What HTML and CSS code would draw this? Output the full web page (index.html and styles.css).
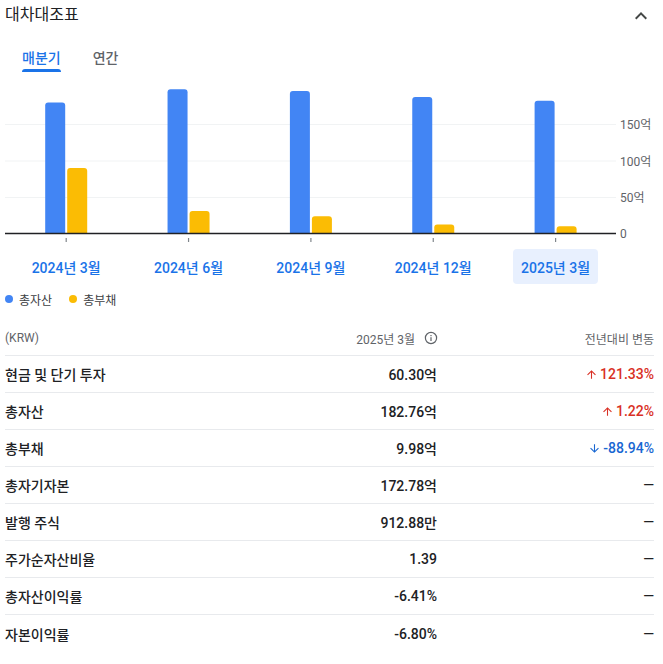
FILE: index.html
```html
<!DOCTYPE html>
<html lang="ko">
<head>
<meta charset="utf-8">
<title>대차대조표</title>
<link rel="stylesheet" href="styles.css">
</head>
<body>
<section class="card">
  <header class="card-head">
    <h2 class="title">대차대조표</h2>
    <svg class="chevron" width="24" height="24" viewBox="0 0 24 24"><path d="M12 8l-6 6 1.41 1.41L12 10.83l4.59 4.58L18 14z" fill="#444746"/></svg>
  </header>

  <nav class="tabs">
    <div class="tab active"><span>매분기</span><i class="bar"></i></div>
    <div class="tab"><span>연간</span><i class="bar"></i></div>
  </nav>

  <svg class="chart" width="663" height="165" viewBox="0 0 663 165">
    <g stroke="#f1f3f4" stroke-width="1">
      <line x1="5" y1="44.5" x2="616" y2="44.5"/>
      <line x1="5" y1="81" x2="616" y2="81"/>
      <line x1="5" y1="117.5" x2="616" y2="117.5"/>
    </g>
    <g class="axis-labels" fill="#5f6368">
      <text x="620" y="49">150억</text>
      <text x="620" y="85.5">100억</text>
      <text x="620" y="122">50억</text>
      <text x="620" y="158">0</text>
    </g>
    <g fill="#4285f4">
      <path d="M45.2 153.5V25.5Q45.2 22.5 48.2 22.5H62.2Q65.2 22.5 65.2 25.5V153.5Z"/>
      <path d="M167.55 153.5V12.2Q167.55 9.2 170.55 9.2H184.55Q187.55 9.2 187.55 12.2V153.5Z"/>
      <path d="M289.9 153.5V13.9Q289.9 10.9 292.9 10.9H306.9Q309.9 10.9 309.9 13.9V153.5Z"/>
      <path d="M412.25 153.5V19.9Q412.25 16.9 415.25 16.9H429.25Q432.25 16.9 432.25 19.9V153.5Z"/>
      <path d="M534.6 153.5V23.8Q534.6 20.8 537.6 20.8H551.6Q554.6 20.8 554.6 23.8V153.5Z"/>
    </g>
    <g fill="#fbbc04">
      <path d="M67.2 153.5V90.9Q67.2 87.9 70.2 87.9H84.2Q87.2 87.9 87.2 90.9V153.5Z"/>
      <path d="M189.55 153.5V133.9Q189.55 130.9 192.55 130.9H206.55Q209.55 130.9 209.55 133.9V153.5Z"/>
      <path d="M311.9 153.5V139.2Q311.9 136.2 314.9 136.2H328.9Q331.9 136.2 331.9 139.2V153.5Z"/>
      <path d="M434.25 153.5V147.5Q434.25 144.5 437.25 144.5H451.25Q454.25 144.5 454.25 147.5V153.5Z"/>
      <path d="M556.6 153.5V149.3Q556.6 146.3 559.6 146.3H573.6Q576.6 146.3 576.6 149.3V153.5Z"/>
    </g>
    <line x1="5" y1="153.5" x2="616" y2="153.5" stroke="#202124" stroke-width="1.5"/>
    <g stroke="#80868b" stroke-width="1.2">
      <line x1="66.2" y1="158" x2="66.2" y2="162"/>
      <line x1="188.55" y1="158" x2="188.55" y2="162"/>
      <line x1="310.9" y1="158" x2="310.9" y2="162"/>
      <line x1="433.25" y1="158" x2="433.25" y2="162"/>
      <line x1="555.6" y1="158" x2="555.6" y2="162"/>
    </g>
  </svg>

  <div class="periods">
    <div class="period"><span class="plabel">2024년 3월</span></div>
    <div class="period"><span class="plabel">2024년 6월</span></div>
    <div class="period"><span class="plabel">2024년 9월</span></div>
    <div class="period"><span class="plabel">2024년 12월</span></div>
    <div class="period"><span class="plabel selected">2025년 3월</span></div>
  </div>

  <div class="legend">
    <span class="lg"><i class="dot blue"></i>총자산</span>
    <span class="lg"><i class="dot yellow"></i>총부채</span>
  </div>

  <div class="table">
    <div class="row head">
      <div class="c-label">(KRW)</div>
      <div class="c-val">2025년 3월
        <svg class="info" width="14" height="14" viewBox="0 0 14 14"><circle cx="7" cy="7" r="5.6" fill="none" stroke="#5f6368" stroke-width="1.2"/><rect x="6.4" y="6.2" width="1.2" height="3.8" fill="#5f6368"/><rect x="6.4" y="4" width="1.2" height="1.2" fill="#5f6368"/></svg>
      </div>
      <div class="c-chg">전년대비 변동</div>
    </div>
    <div class="row">
      <div class="c-label">현금 및 단기 투자</div>
      <div class="c-val">60.30억</div>
      <div class="c-chg up"><svg class="arr" width="13" height="13" viewBox="0 0 24 24"><path d="M4 12l1.41 1.41L11 7.83V20h2V7.83l5.58 5.59L20 12l-8-8-8 8z" fill="currentColor"/></svg>121.33%</div>
    </div>
    <div class="row">
      <div class="c-label">총자산</div>
      <div class="c-val">182.76억</div>
      <div class="c-chg up"><svg class="arr" width="13" height="13" viewBox="0 0 24 24"><path d="M4 12l1.41 1.41L11 7.83V20h2V7.83l5.58 5.59L20 12l-8-8-8 8z" fill="currentColor"/></svg>1.22%</div>
    </div>
    <div class="row">
      <div class="c-label">총부채</div>
      <div class="c-val">9.98억</div>
      <div class="c-chg down"><svg class="arr" width="13" height="13" viewBox="0 0 24 24"><path d="M20 12l-1.41-1.41L13 16.17V4h-2v12.17l-5.58-5.59L4 12l8 8 8-8z" fill="currentColor"/></svg>-88.94%</div>
    </div>
    <div class="row">
      <div class="c-label">총자기자본</div>
      <div class="c-val">172.78억</div>
      <div class="c-chg">—</div>
    </div>
    <div class="row">
      <div class="c-label">발행 주식</div>
      <div class="c-val">912.88만</div>
      <div class="c-chg">—</div>
    </div>
    <div class="row">
      <div class="c-label">주가순자산비율</div>
      <div class="c-val">1.39</div>
      <div class="c-chg">—</div>
    </div>
    <div class="row">
      <div class="c-label">총자산이익률</div>
      <div class="c-val">-6.41%</div>
      <div class="c-chg">—</div>
    </div>
    <div class="row last">
      <div class="c-label">자본이익률</div>
      <div class="c-val">-6.80%</div>
      <div class="c-chg">—</div>
    </div>
  </div>
</section>
</body>
</html>
```

FILE: styles.css
```css
* { box-sizing: border-box; }
html, body { margin: 0; padding: 0; background: #fff; }
body {
  font-family: "Roboto", "Noto Sans CJK KR", sans-serif;
  color: #202124;
  width: 663px;
}
.card { width: 663px; }

.card-head {
  height: 30px;
  display: flex;
  align-items: center;
  justify-content: space-between;
  padding: 0 10px 0 5px;
}
.title {
  margin: 0;
  font-size: 16px;
  font-weight: 400;
  line-height: 30px;
  color: #202124;
}
.chevron { display: block; margin-top: 1px; }

.tabs {
  display: flex;
  gap: 32px;
  padding-left: 22px;
  height: 50px;
}
.tab {
  display: flex;
  flex-direction: column;
  padding-top: 18px;
  font-size: 14px;
  font-weight: 500;
  color: #5f6368;
}
.tab span { line-height: 20px; height: 20px; }
.tab .bar {
  display: block;
  height: 3px;
  margin-top: 1px;
  border-radius: 3px 3px 0 0;
  background: transparent;
}
.tab.active { color: #1a73e8; }
.tab.active .bar { background: #1a73e8; }

.chart { display: block; }
.axis-labels { font-size: 12px; font-family: "Roboto", "Noto Sans CJK KR", sans-serif; }

.periods {
  display: flex;
  padding-left: 5px;
  margin-top: 4px;
  height: 35px;
}
.period {
  width: 122.35px;
  display: flex;
  justify-content: center;
}
.plabel {
  display: flex;
  align-items: center;
  height: 35px;
  padding: 0 8px;
  border-radius: 4px;
  font-size: 14px;
  font-weight: 500;
  color: #1a73e8;
  white-space: nowrap;
}
.plabel.selected { background: #e8f0fe; }

.legend {
  display: flex;
  gap: 17px;
  margin-top: 5px;
  height: 20px;
  align-items: center;
  padding-left: 5px;
  font-size: 12px;
  color: #3c4043;
}
.lg { display: flex; align-items: center; gap: 6px; }
.dot { display: block; width: 8px; height: 8px; border-radius: 50%; }
.dot.blue { background: #4285f4; }
.dot.yellow { background: #fbbc04; }

.table { margin-top: 12px; padding: 0 9px 0 5px; }
.row {
  display: grid;
  grid-template-columns: 1fr 137px 217px;
  align-items: center;
  height: 37px;
  border-bottom: 1px solid #e8eaed;
  font-size: 14px;
  font-weight: 500;
  color: #202124;
}
.row.head {
  height: 35px;
  font-size: 12px;
  font-weight: 400;
  color: #5f6368;
}
.row.last { border-bottom: none; }
.c-val, .c-chg {
  display: flex;
  justify-content: flex-end;
  align-items: center;
  white-space: nowrap;
}
.info { margin-left: 9px; margin-right: -1px; }
.up { color: #d93025; }
.down { color: #1967d2; }
.arr { margin-right: 2px; }
```
